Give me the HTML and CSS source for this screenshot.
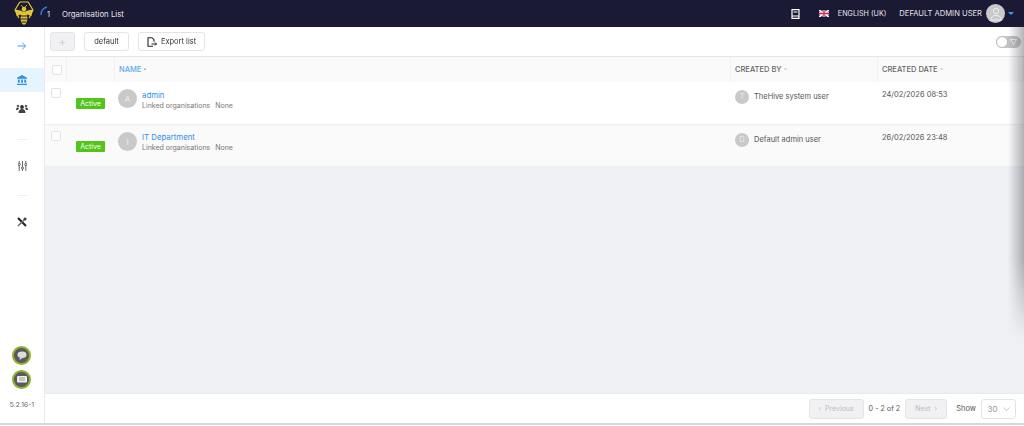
FILE: index.html
```html
<!DOCTYPE html>
<html>
<head>
<title>Organisation List</title>
<meta charset="UTF-8">
<link rel="stylesheet" href="styles.css">
</head>

<body>

<header class="topbar">
  <svg class="logo" width="20" height="25" viewBox="0 0 20 25">
    <path d="M5.800 1h8.400l4.800 8-3.800 8M5.800 1L1 9l3.800 8" fill="none" stroke="#e5c534" stroke-width="1.200"/>
    <path d="M8.500 10L1.500 8.500 2.500 15l6-2zM11.500 10l7-1.500-1 6.500-6-2z" fill="#e5c534"/>
    <ellipse cx="10" cy="17" rx="3.400" ry="6.800" fill="#e5c534"/>
    <path d="M6.600 15h6.800M6.500 18h7M7.500 21h5" stroke="#1b1a35" stroke-width="1"/>
    <circle cx="10" cy="8" r="2.300" fill="#e5c534"/>
    <path d="M7 4l2 2M13 4l-2 2" stroke="#e5c534" stroke-width=".8"/>
  </svg>
  <svg class="spinner" width="8" height="10" viewBox="0 0 8 10"><path d="M1 9C1 5 3 2 7 1" fill="none" stroke="#2f7fd6" stroke-width="1.300"/></svg>
  <span class="count">1</span>
  <span class="page-title">Organisation List</span>
  <div class="topbar-right">
    <svg class="book" width="9" height="10" viewBox="0 0 9 10"><path d="M1 .7h7v8.600H1zM2.500 3h4M1 7h7" fill="none" stroke="#fff" stroke-width="1.200"/></svg>
    <svg class="flag" width="10" height="7" viewBox="0 0 10 7">
      <rect width="10" height="7" fill="#2b3a78"/>
      <path d="M0 0l10 7M10 0L0 7" stroke="#fff" stroke-width="1.500"/>
      <path d="M5 0v7M0 3.500h10" stroke="#fff" stroke-width="2.500"/>
      <path d="M5 0v7M0 3.500h10" stroke="#d8283f" stroke-width="1.400"/>
    </svg>
    <span class="lang">ENGLISH (UK)</span>
    <span class="user">DEFAULT ADMIN USER</span>
    <span class="user-avatar">
      <svg width="12" height="14" viewBox="0 0 12 14"><circle cx="6" cy="4" r="2.600" fill="none" stroke="#eee" stroke-width="1"/><path d="M1 13c0-3.500 2-4.500 5-4.500s5 1 5 4.500z" fill="none" stroke="#eee" stroke-width="1"/></svg>
    </span>
    <span class="caret"></span>
  </div>
</header>

<div class="main">
  <nav class="sidebar">
    <div class="nav-item nav-arrow">
      <svg width="10" height="8" viewBox="0 0 11 10"><path d="M0 5h10M6 1l4 4-4 4" fill="none" stroke="#3a9bf0" stroke-width="1.200"/></svg>
    </div>
    <div class="nav-item nav-active">
      <svg width="10" height="10" viewBox="0 0 11 11"><path d="M5.500 0L11 3v1H0V3zM1 5h2v3.500H1zM4.500 5h2v3.500h-2zM8 5h2v3.500H8zM0 9.500h11V11H0z" fill="#2f8fe8"/></svg>
    </div>
    <div class="nav-item nav-people">
      <svg width="12" height="9" viewBox="0 0 12 9"><circle cx="6" cy="3" r="1.900" fill="#333"/><circle cx="2" cy="2" r="1.300" fill="#666"/><circle cx="10" cy="2" r="1.300" fill="#666"/><path d="M2.500 9c0-3 1.500-4 3.500-4s3.500 1 3.500 4zM0 6c0-2 1-2.500 2-2.500L3 4.500 1.800 6zM12 6c0-2-1-2.500-2-2.500L9 4.500 10.200 6z" fill="#444"/></svg>
    </div>
    <div class="nav-sep"></div>
    <div class="nav-item">
      <svg width="9" height="10" viewBox="0 0 9 10"><path d="M1.200 0v10M4.500 0v10M7.800 0v10" stroke="#444" stroke-width=".8"/><circle cx="1.200" cy="3.500" r="1.100" fill="#fff" stroke="#444" stroke-width=".8"/><circle cx="4.500" cy="7" r="1.100" fill="#fff" stroke="#444" stroke-width=".8"/><circle cx="7.800" cy="3.500" r="1.100" fill="#fff" stroke="#444" stroke-width=".8"/></svg>
    </div>
    <div class="nav-sep"></div>
    <div class="nav-item">
      <svg width="10" height="10" viewBox="0 0 10 10"><path d="M1 1l8 8" stroke="#222" stroke-width="2.200"/><path d="M9 1L1 9" stroke="#666" stroke-width="1.400"/><circle cx="8" cy="2" r="1.500" fill="#444"/></svg>
    </div>
    <div class="nav-bottom">
      <div class="round-btn">
        <svg width="10" height="9" viewBox="0 0 10 9"><ellipse cx="5" cy="3.800" rx="4.500" ry="3.300" fill="#ddd"/><path d="M3 6.500L2.500 9 5.500 7z" fill="#ddd"/></svg>
      </div>
      <div class="round-btn">
        <svg width="10" height="8" viewBox="0 0 10 8"><rect width="10" height="6.500" rx="1" fill="#eee"/><path d="M2 2h6M2 4h6" stroke="#777" stroke-width=".7"/></svg>
      </div>
      <div class="version">5.2.16-1</div>
    </div>
  </nav>

  <div class="content">
    <div class="toolbar">
      <button class="btn btn-add">+</button>
      <button class="btn btn-default">default</button>
      <button class="btn btn-export">
        <svg width="10" height="10" viewBox="0 0 10 10"><path d="M6 9.300H1V.7h4l2 2v2" fill="none" stroke="#222" stroke-width="1.100"/><path d="M4.500 7H9.500M8 5.500L9.500 7 8 8.500" fill="none" stroke="#222" stroke-width="1"/></svg>
        Export list
      </button>
      <div class="filter-toggle">
        <span class="knob"></span>
        <svg width="7" height="6" viewBox="0 0 7 6"><path d="M.5.500h6L3.500 5.500z" fill="none" stroke="#fff" stroke-width=".8"/></svg>
      </div>
    </div>

    <div class="table-head">
      <div class="col-check"><span class="checkbox"></span></div>
      <div class="col-status"></div>
      <div class="col-name name-head">NAME<span class="sort sort-on"></span></div>
      <div class="col-by">CREATED BY<span class="sort"></span></div>
      <div class="col-date">CREATED DATE<span class="sort"></span></div>
    </div>

    <div class="row">
      <div class="col-check"><span class="checkbox"></span></div>
      <div class="col-status"><span class="badge">Active</span></div>
      <div class="col-name name-cell">
        <span class="avatar">A</span>
        <div>
          <a class="org-link">admin</a>
          <div class="linked"><span>Linked organisations</span><span>None</span></div>
        </div>
      </div>
      <div class="col-by by-cell"><span class="avatar avatar-sm">T</span>TheHive system user</div>
      <div class="col-date date-cell">24/02/2026 08:53</div>
    </div>

    <div class="row row-alt">
      <div class="col-check"><span class="checkbox"></span></div>
      <div class="col-status"><span class="badge">Active</span></div>
      <div class="col-name name-cell">
        <span class="avatar">I</span>
        <div>
          <a class="org-link">IT Department</a>
          <div class="linked"><span>Linked organisations</span><span>None</span></div>
        </div>
      </div>
      <div class="col-by by-cell"><span class="avatar avatar-sm">D</span>Default admin user</div>
      <div class="col-date date-cell">26/02/2026 23:48</div>
    </div>

    <div class="empty"></div>

    <div class="pager">
      <button class="btn btn-page btn-prev">&#8249;&nbsp; Previous</button>
      <span class="pager-count">0 - 2 of 2</span>
      <button class="btn btn-page btn-next">Next &nbsp;&#8250;</button>
      <span class="show-label">Show</span>
      <span class="show-select">30 <svg width="7" height="4" viewBox="0 0 7 4"><path d="M.5.500l3 3 3-3" fill="none" stroke="#aaa" stroke-width=".7"/></svg></span>
    </div>
  </div>
</div>

<div class="edge-shadow"></div>

</body>
</html>
```

FILE: styles.css
```css
* {
  box-sizing: border-box;
}

html, body {
  margin: 0;
  height: 100%;
  overflow: hidden;
}

body {
  position: relative;
  width: 1024px;
  height: 426px;
  padding-bottom: 1px;
  display: flex;
  flex-direction: column;
  font-family: Inter, "Open Sans", sans-serif;
  font-size: 7.5px;
  color: #555;
  background: #fff;
  filter: blur(.35px); /* the reference is a soft, scaled capture */
}

/* top bar */
.topbar {
  height: 27px;
  flex: none;
  display: flex;
  align-items: center;
  padding-left: 14px;
  background: #1b1a35;
  color: #e4e4ea;
}

.logo {
  flex: none;
}

.spinner {
  margin: -6px 0 0 6px;
}

.count {
  margin-left: -1px;
  margin-top: 2px;
  font-size: 7.5px;
}

.page-title {
  margin-left: 12px;
  font-size: 7.8px;
}

.topbar-right {
  margin-left: auto;
  display: flex;
  align-items: center;
  padding-right: 10px;
}

.flag {
  margin-left: 19px;
}

.lang {
  margin-left: 9px;
  font-size: 7.2px;
}

.user {
  margin-left: 13px;
  font-size: 7.6px;
}

.user-avatar {
  width: 19px;
  height: 19px;
  margin-left: 4px;
  border-radius: 50%;
  background: #c9c9c9;
  display: flex;
  align-items: center;
  justify-content: center;
}

.caret {
  width: 0;
  height: 0;
  margin-left: 3px;
  border: 3px solid transparent;
  border-top: 3px solid #3a9bf0;
  border-bottom: 0;
}

.main {
  flex: 1;
  display: flex;
  min-height: 0;
  border-bottom: 2px solid #d8d8db;
}

/* sidebar */
.sidebar {
  width: 45px;
  flex: none;
  display: flex;
  flex-direction: column;
  align-items: center;
  padding-top: 7px;
  border-right: 1px solid #e9e9ee;
  background: #fff;
}

.nav-item {
  width: 100%;
  height: 24px;
  display: flex;
  align-items: center;
  justify-content: center;
}

.nav-arrow {
  margin-bottom: 10px;
}

.nav-active {
  background: #e6f4ff;
}

.nav-people {
  margin-top: 4px;
  margin-bottom: 2px;
}

.nav-sep {
  width: 10px;
  height: 1px;
  margin: 17px 0 14px;
  background: #eee;
}

.nav-bottom {
  margin-top: auto;
  padding-bottom: 14px;
  display: flex;
  flex-direction: column;
  align-items: center;
  gap: 5px;
}

.round-btn {
  width: 19px;
  height: 19px;
  border-radius: 50%;
  border: 2px solid #8fb02c;
  background: #5a5a5e;
  display: flex;
  align-items: center;
  justify-content: center;
}

.version {
  margin-top: 6px;
  font-size: 6.8px;
  color: #666;
}

/* content */
.content {
  flex: 1;
  min-width: 0;
  display: flex;
  flex-direction: column;
  background: #fff;
}

.toolbar {
  height: 29px;
  flex: none;
  display: flex;
  align-items: center;
  padding: 0 5px;
  gap: 9px;
}

.btn {
  height: 19px;
  padding: 0;
  border: 1px solid #e4e4e8;
  border-radius: 3px;
  background: #fff;
  color: #333;
  font-family: inherit;
  font-size: 7.5px;
  display: inline-flex;
  align-items: center;
  justify-content: center;
}

.btn-add {
  width: 25px;
  background: #f1f1f3;
  color: #ccc;
  font-size: 11px;
}

.btn-default {
  width: 45px;
}

.btn-export {
  width: 67px;
  gap: 4px;
}

.filter-toggle {
  margin-left: auto;
  margin-right: -2px;
  width: 25px;
  height: 12px;
  padding-right: 4px;
  border-radius: 6px;
  background: #c4c4c7;
  display: flex;
  align-items: center;
  justify-content: space-between;
}

.knob {
  width: 12px;
  height: 12px;
  border-radius: 50%;
  background: #fff;
  border: 1px solid #bbb;
}

/* table */
.table-head,
.row {
  display: grid;
  grid-template-columns: 22px 48px 616px 147px 1fr;
}

.table-head {
  height: 26px;
  flex: none;
  background: #fafafa;
  border-top: 1px solid #e6e6ea;
  font-size: 7.5px;
  color: #666;
  font-weight: 500;
}

.table-head > div {
  display: flex;
  align-items: center;
  padding-left: 4px;
  border-right: 1px solid #f0f0f2;
}

.table-head .col-check {
  padding-left: 7px;
}

.table-head .name-head {
  color: #5aa9f0;
}

/* two tiny triangles */
.sort {
  margin: -5px 0 0 3px;
  width: 0;
  height: 5px;
  border-left: 1.5px solid transparent;
  border-right: 1.5px solid transparent;
  border-bottom: 2px solid #ccc;
  position: relative;
}

.sort::after {
  content: "";
  position: absolute;
  top: 3px;
  left: -1.5px;
  border-left: 1.5px solid transparent;
  border-right: 1.5px solid transparent;
  border-top: 2px solid #ccc;
}

.sort-on {
  border-bottom-color: #3a9bf0;
}

.row {
  height: 42px;
  flex: none;
  background: #fff;
}

.row-alt {
  border-top: 1px solid #efeff1;
  background: #fafafa;
}

.checkbox {
  display: block;
  width: 10px;
  height: 10px;
  border: 1px solid #e2e2e6;
  border-radius: 2px;
  background: #fff;
}

.row .col-check {
  padding: 6px 0 0 6px;
}

.row .col-status {
  padding: 16px 0 0 9px;
}

.badge {
  display: block;
  width: 29px;
  height: 11px;
  border-radius: 1px;
  background: #52c41a;
  color: #fff;
  font-size: 7px;
  line-height: 11px;
  text-align: center;
}

.name-cell {
  display: flex;
  padding: 7px 0 0 3px;
  gap: 5px;
}

.avatar {
  width: 19px;
  height: 19px;
  flex: none;
  border-radius: 50%;
  background: #c9c9c9;
  color: #eee;
  font-size: 8px;
  display: flex;
  align-items: center;
  justify-content: center;
}

.avatar-sm {
  width: 14px;
  height: 14px;
  font-size: 7px;
  margin-right: 5px;
}

.org-link {
  display: block;
  margin-top: 1px;
  color: #2f8fe8;
  font-size: 7.8px;
  line-height: 10px;
}

.row-alt .org-link {
  margin-top: 0;
}

.linked {
  margin-top: 1px;
  display: flex;
  gap: 5px;
  font-size: 7px;
  line-height: 10px;
  color: #777;
}

.by-cell {
  display: flex;
  align-items: flex-start;
  padding: 8px 0 0 4px;
  line-height: 14px;
}

.date-cell {
  padding: 8px 0 0 4px;
  line-height: 10px;
}

.empty {
  flex: 1;
  background: #eff0f4;
}

.pager {
  height: 30px;
  flex: none;
  display: flex;
  align-items: center;
  justify-content: flex-end;
  padding: 0 8px 0 0;
  border-top: 1px solid #e9e9ee;
  background: #fff;
}

.btn-page {
  height: 20px;
  background: #f1f1f3;
  color: #bbb;
  font-size: 7px;
}

.btn-prev {
  width: 55px;
}

.btn-next {
  width: 42px;
}

.pager-count {
  margin: 0 5px;
  font-size: 7.2px;
}

.show-label {
  margin: 0 5px 0 9px;
}

.show-select {
  width: 35px;
  height: 20px;
  border: 1px solid #e4e4e8;
  border-radius: 3px;
  color: #999;
  font-size: 8px;
  display: flex;
  align-items: center;
  justify-content: center;
  gap: 5px;
}

/* shadow of the panel sliding in from the right */
.edge-shadow {
  position: absolute;
  top: 27px;
  right: 0;
  width: 16px;
  height: 310px;
  background: linear-gradient(to right, rgba(60, 60, 70, 0), rgba(60, 60, 70, .38));
  -webkit-mask-image: linear-gradient(to bottom, #000 75%, transparent);
  mask-image: linear-gradient(to bottom, #000 75%, transparent);
}
```
